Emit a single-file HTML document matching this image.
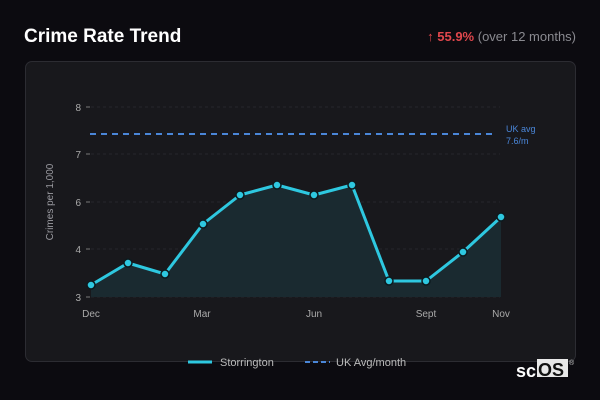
<!DOCTYPE html><html><head><style>
body{margin:0;width:600px;height:400px;background:#0c0b10;font-family:"Liberation Sans",sans-serif;position:relative;overflow:hidden}
.t{position:absolute;left:24px;top:26px;color:#fff;font-weight:bold;font-size:19px}
.r{position:absolute;right:24px;top:29px;font-size:13px;color:#8a8a90}
.r b{color:#e0474c}
.card{position:absolute;left:25px;top:61px;width:549px;height:299px;background:#18181c;border:1px solid #2c2c32;border-radius:7px}
svg{position:absolute;left:0;top:0}
</style></head><body>
<div class="t">Crime Rate Trend</div>
<div class="r"><span style="color:#e0474c">↑</span> <b>55.9%</b> (over 12 months)</div>
<div class="card"></div>
<svg width="600" height="400" font-family="Liberation Sans, sans-serif">
<g stroke="#26262c" stroke-dasharray="3,3" stroke-width="1">
<line x1="91" y1="107" x2="500" y2="107"/><line x1="91" y1="154" x2="500" y2="154"/><line x1="91" y1="202" x2="500" y2="202"/><line x1="91" y1="249" x2="500" y2="249"/><line x1="91" y1="297" x2="500" y2="297"/></g>
<g stroke="#777" stroke-width="1"><line x1="86" y1="107" x2="90" y2="107"/><line x1="86" y1="154" x2="90" y2="154"/><line x1="86" y1="202" x2="90" y2="202"/><line x1="86" y1="249" x2="90" y2="249"/><line x1="86" y1="297" x2="90" y2="297"/></g>
<g fill="#aaa" font-size="10" text-anchor="end"><text x="81" y="111">8</text><text x="81" y="158">7</text><text x="81" y="206">6</text><text x="81" y="253">4</text><text x="81" y="301">3</text></g>
<text transform="translate(53,202) rotate(-90)" fill="#9a9aa0" font-size="10" text-anchor="middle">Crimes per 1,000</text>
<g fill="#aaa" font-size="10" text-anchor="middle"><text x="91" y="317">Dec</text><text x="202" y="317">Mar</text><text x="314" y="317">Jun</text><text x="426" y="317">Sept</text><text x="501" y="317">Nov</text></g>
<polygon fill="#1a2a30" points="91,297 91,285 128,263 165,274 203,224 240,195 277,185 314,195 352,185 389,281 426,281 463,252 501,217 501,297"/>
<line x1="90" y1="134" x2="497" y2="134" stroke="#4a86d8" stroke-width="2" stroke-dasharray="6,5"/>
<text x="506" y="132" fill="#4a86d8" font-size="9">UK avg</text><text x="506" y="144" fill="#4a86d8" font-size="9">7.6/m</text>
<polyline fill="none" stroke="#2ec8e0" stroke-width="3" stroke-linejoin="round" points="91,285 128,263 165,274 203,224 240,195 277,185 314,195 352,185 389,281 426,281 463,252 501,217"/>
<g fill="#2ec8e0" stroke="#0d1a1e" stroke-width="1.5"><circle cx="91" cy="285" r="4"/><circle cx="128" cy="263" r="4"/><circle cx="165" cy="274" r="4"/><circle cx="203" cy="224" r="4"/><circle cx="240" cy="195" r="4"/><circle cx="277" cy="185" r="4"/><circle cx="314" cy="195" r="4"/><circle cx="352" cy="185" r="4"/><circle cx="389" cy="281" r="4"/><circle cx="426" cy="281" r="4"/><circle cx="463" cy="252" r="4"/><circle cx="501" cy="217" r="4"/></g>
<line x1="188" y1="362" x2="212" y2="362" stroke="#2ec8e0" stroke-width="3"/>
<text x="220" y="366" fill="#bbb" font-size="11">Storrington</text>
<line x1="305" y1="362" x2="330" y2="362" stroke="#4a86d8" stroke-width="2" stroke-dasharray="5,3"/>
<text x="336" y="366" fill="#bbb" font-size="11">UK Avg/month</text>
<rect x="537" y="359" width="31" height="18" fill="#e8e8e8"/>
<text x="516" y="377" fill="#fff" font-size="18" font-weight="bold">sc</text>
<text x="538" y="376" fill="#111" font-size="18" font-weight="bold">OS</text>
<text x="569" y="365" fill="#ccc" font-size="7">®</text>
</svg>
</body></html>
